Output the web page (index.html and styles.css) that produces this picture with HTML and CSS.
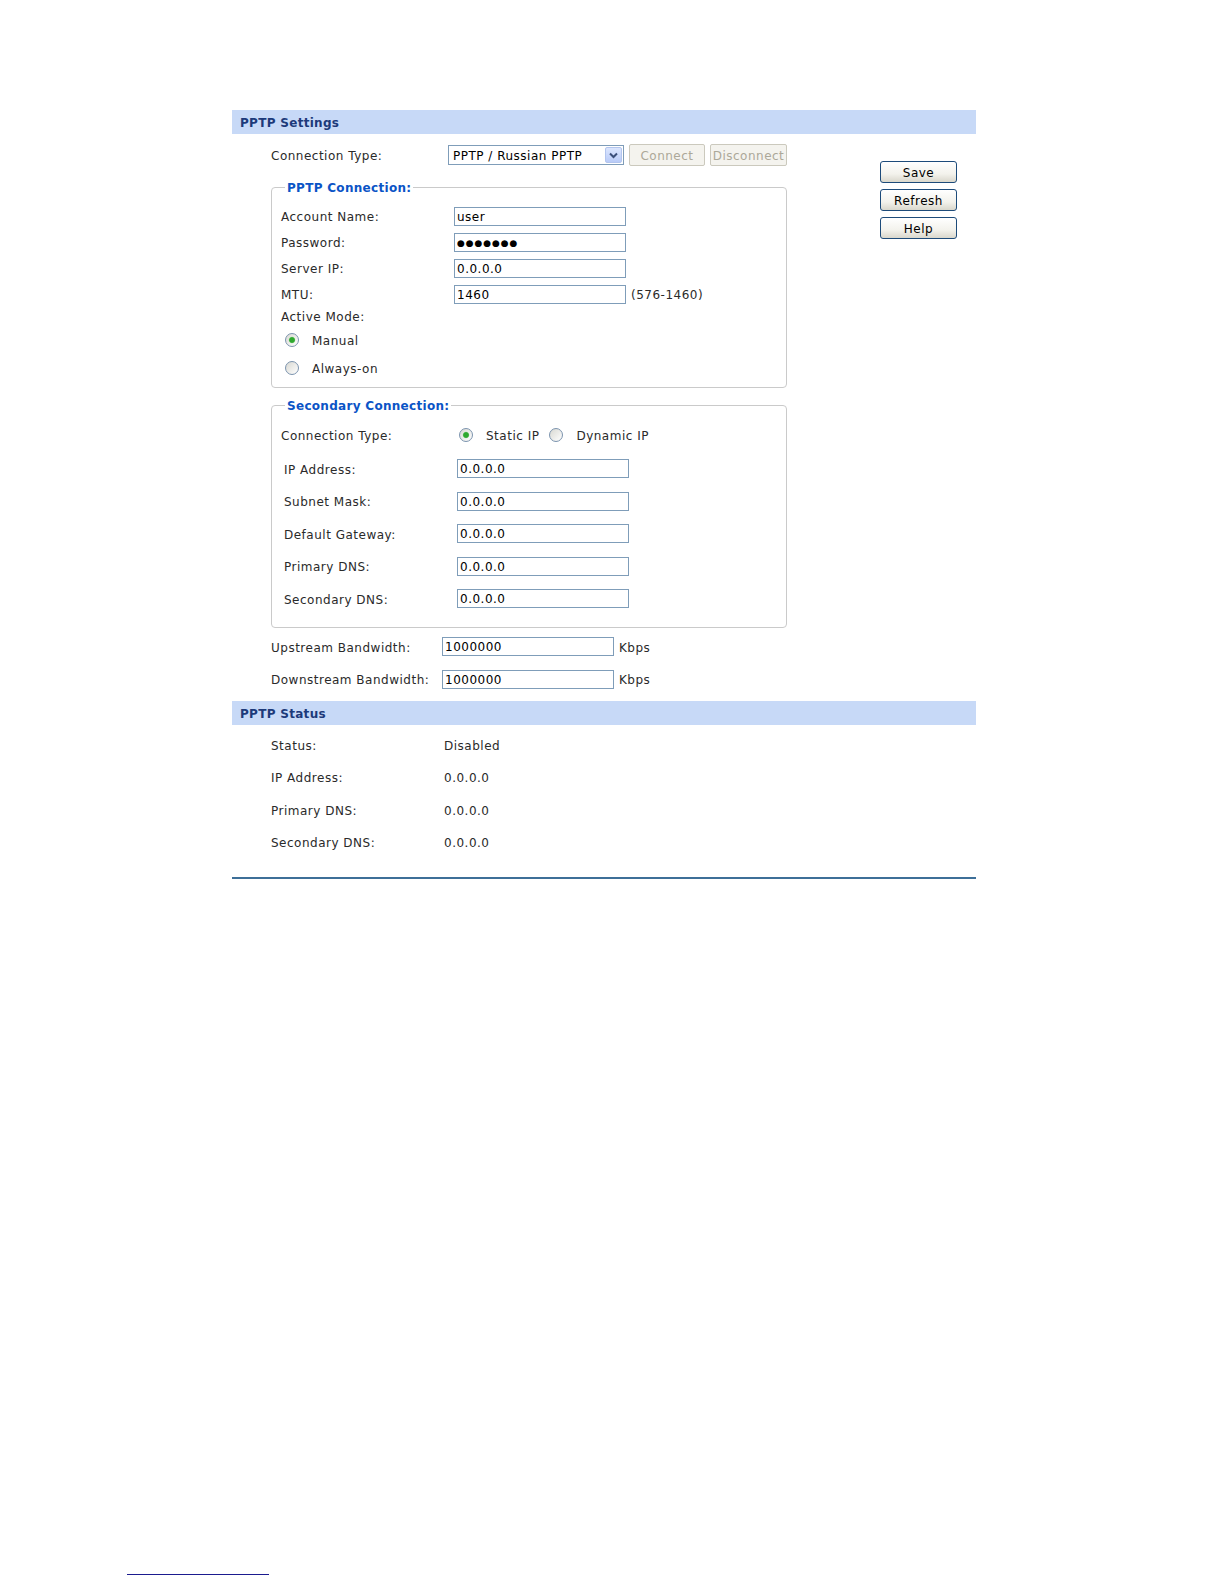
FILE: index.html
```html
<!DOCTYPE html>
<html>

<head>
	<title>PPTP Settings</title>
	<meta charset="UTF-8" />
	<link rel="stylesheet" href="styles.css">
</head>

<body>

<div class="page">
	<div class="band">PPTP Settings</div>

	<div class="settings">
		<div class="form">
			<div class="row top-row">
				<label class="lbl">Connection Type:</label>
				<div class="select">
					<span class="txtline">PPTP / Russian PPTP</span>
					<span class="arrow">
						<svg width="9" height="7" viewBox="0 0 9 7"><path d="M1 1.5 L4.5 5 L8 1.5" fill="none" stroke="#3b4f7a" stroke-width="2"/></svg>
					</span>
				</div>
				<button class="btn-off" disabled>Connect</button>
				<button class="btn-off wide" disabled>Disconnect</button>
			</div>

			<fieldset class="group g1">
				<legend>PPTP Connection:</legend>
				<div class="frow">
					<label class="flbl" for="account">Account Name:</label>
					<input id="account" class="txt" type="text" value="user" />
				</div>
				<div class="frow">
					<label class="flbl" for="password">Password:</label>
					<input id="password" class="txt pass" type="text" value="●●●●●●●" />
				</div>
				<div class="frow">
					<label class="flbl" for="server">Server IP:</label>
					<input id="server" class="txt" type="text" value="0.0.0.0" />
				</div>
				<div class="frow">
					<label class="flbl" for="mtu">MTU:</label>
					<input id="mtu" class="txt" type="text" value="1460" />
					<span class="hint">(576-1460)</span>
				</div>
				<div class="frow amode"><span class="txtline">Active Mode:</span></div>
				<div class="frow manual">
					<input class="radio" type="radio" name="mode" checked />
					<span class="rlabel">Manual</span>
				</div>
				<div class="frow always">
					<input class="radio" type="radio" name="mode" />
					<span class="rlabel">Always-on</span>
				</div>
			</fieldset>

			<fieldset class="group g2">
				<legend>Secondary Connection:</legend>
				<div class="frow ctype">
					<span class="clbl">Connection Type:</span>
					<input class="radio" type="radio" name="second" checked />
					<span class="rlabel gap">Static IP</span>
					<input class="radio" type="radio" name="second" />
					<span class="rlabel">Dynamic IP</span>
				</div>
				<div class="irow first">
					<label class="ilbl">IP Address:</label>
					<input class="txt" type="text" value="0.0.0.0" />
				</div>
				<div class="irow">
					<label class="ilbl">Subnet Mask:</label>
					<input class="txt" type="text" value="0.0.0.0" />
				</div>
				<div class="irow">
					<label class="ilbl">Default Gateway:</label>
					<input class="txt" type="text" value="0.0.0.0" />
				</div>
				<div class="irow">
					<label class="ilbl">Primary DNS:</label>
					<input class="txt" type="text" value="0.0.0.0" />
				</div>
				<div class="irow">
					<label class="ilbl">Secondary DNS:</label>
					<input class="txt" type="text" value="0.0.0.0" />
				</div>
			</fieldset>

			<div class="bw first">
				<label class="blbl">Upstream Bandwidth:</label>
				<input class="txt" type="text" value="1000000" />
				<span class="hint">Kbps</span>
			</div>
			<div class="bw">
				<label class="blbl">Downstream Bandwidth:</label>
				<input class="txt" type="text" value="1000000" />
				<span class="hint">Kbps</span>
			</div>
		</div>

		<div class="side">
			<button class="btn">Save</button>
			<button class="btn">Refresh</button>
			<button class="btn">Help</button>
		</div>
	</div>

	<div class="band">PPTP Status</div>

	<div class="status">
		<div class="srow"><span class="slbl">Status:</span><span class="txtline">Disabled</span></div>
		<div class="srow"><span class="slbl">IP Address:</span><span class="txtline">0.0.0.0</span></div>
		<div class="srow"><span class="slbl">Primary DNS:</span><span class="txtline">0.0.0.0</span></div>
		<div class="srow"><span class="slbl">Secondary DNS:</span><span class="txtline">0.0.0.0</span></div>
	</div>
</div>

<div class="footnote-rule"></div>

</body>

</html>
```

FILE: styles.css
```css
body {
  margin: 0;
  background: #fff;
  color: #2a2a2a;
  font-family: "DejaVu Sans", Verdana, sans-serif;
  font-size: 12px;
  letter-spacing: 0.5px;
}

.page {
  margin-left: 232px;
  width: 744px;
  padding-top: 110px;
}

.band {
  height: 24px;
  line-height: 26px;
  padding-left: 8px;
  background: #c7d9f7;
  color: #1d3a7a;
  font-weight: bold;
  letter-spacing: 0.3px;
}

.settings {
  display: flex;
}

.form {
  margin-left: 39px;
  width: 516px;
  padding-top: 10px;
  padding-bottom: 5px;
}

.side {
  margin-left: 93px;
  padding-top: 27px;
  display: flex;
  flex-direction: column;
  gap: 6px;
}

/* text nudged down a little so it sits centred like the original */
.txtline,
.lbl,
.flbl,
.clbl,
.ilbl,
.blbl,
.slbl,
.hint,
.rlabel {
  padding-top: 2px;
}

.row {
  display: flex;
  align-items: center;
  height: 22px;
}

.lbl {
  width: 177px;
  flex: none;
}

.select {
  box-sizing: border-box;
  width: 176px;
  height: 20px;
  border: 1px solid #7f9db9;
  padding-left: 4px;
  display: flex;
  align-items: center;
  justify-content: space-between;
  background: #fff;
  color: #000;
}

.arrow {
  box-sizing: border-box;
  width: 17px;
  height: 16px;
  margin-right: 1px;
  border: 1px solid #b3c5ee;
  border-radius: 2px;
  background: linear-gradient(#dce6fe, #b9cbf8);
  display: flex;
  align-items: center;
  justify-content: center;
}

.btn-off {
  width: 76px;
  height: 22px;
  margin-left: 5px;
  padding: 2px 0 0;
  border: 1px solid #cbc9bd;
  border-radius: 2px;
  background: #f4f3ee;
  color: #aca899;
  font: inherit;
  letter-spacing: inherit;
}

.btn-off.wide {
  width: 77px;
}

.btn {
  width: 77px;
  height: 22px;
  padding: 2px 0 0;
  border: 1px solid #1d4b7a;
  border-radius: 3px;
  background: linear-gradient(#ffffff, #f3f2ec 60%, #d9d7cc);
  color: #000;
  font: inherit;
  letter-spacing: inherit;
}

.group {
  margin: 13px 0 0;
  padding: 8px 0 7px 9px;
  border: 1px solid #cacaca;
  border-radius: 4px;
}

.group legend {
  margin-left: 4px;
  padding: 2px 2px 0;
  line-height: 14px;
  font-weight: bold;
  color: #0b54c6;
  letter-spacing: 0.3px;
}

.g2 {
  margin-top: 9px;
  padding: 9px 0 12px 9px;
}

.frow {
  display: flex;
  align-items: center;
  height: 26px;
}

.flbl {
  width: 173px;
  flex: none;
}

.amode {
  height: 18px;
}

.manual {
  height: 30px;
}

.always {
  height: 25px;
}

.txt {
  box-sizing: border-box;
  width: 172px;
  height: 19px;
  margin: 0;
  padding: 1px 2px 0;
  border: 1px solid #7f9db9;
  color: #000;
  font: inherit;
  letter-spacing: inherit;
}

.pass {
  font-size: 9px;
  letter-spacing: 0.9px;
}

.hint {
  margin-left: 5px;
}

.radio {
  appearance: none;
  flex: none;
  width: 14px;
  height: 14px;
  margin: 0 0 0 4px;
  border: 1px solid #7b93ae;
  border-radius: 50%;
  background: linear-gradient(135deg, #d8d8d2, #ffffff);
}

.radio:checked {
  background: radial-gradient(circle, #2fa82f 0 2.4px, #86cf86 3px, transparent 3.6px), linear-gradient(135deg, #d8d8d2, #ffffff);
}

.rlabel {
  margin-left: 13px;
}

.rlabel.gap {
  margin-right: 6px;
}

.clbl {
  width: 174px;
  flex: none;
}

.irow {
  display: flex;
  align-items: center;
  height: 32.4px;
  padding-left: 3px;
}

.irow.first {
  margin-top: 4.8px;
}

.ilbl {
  width: 173px;
  flex: none;
}

.bw {
  display: flex;
  align-items: center;
  height: 32.4px;
}

.bw.first {
  margin-top: 3px;
}

.blbl {
  width: 171px;
  flex: none;
}

.status {
  padding: 4px 0 19px 39px;
  border-bottom: 2px solid #3d6f98;
}

.srow {
  display: flex;
  align-items: center;
  height: 32.4px;
}

.slbl {
  width: 173px;
  flex: none;
}

.footnote-rule {
  margin: 695px 0 0 127px;
  width: 142px;
  border-top: 1px solid #1b1b8f;
}
```
